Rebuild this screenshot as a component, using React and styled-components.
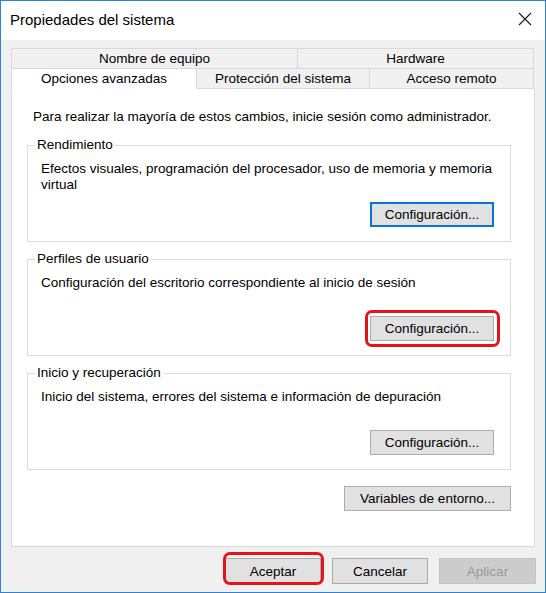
import React from "react"
import styled, { createGlobalStyle } from "styled-components"

const GlobalStyle = createGlobalStyle`
  html, body {
    margin: 0;
    padding: 0;
    background: #ffffff;
  }
  body {
    font-family: "Liberation Sans", Arial, sans-serif;
    font-size: 13.5px;
    color: #000;
  }
`

const Window = styled.div`
  box-sizing: border-box;
  width: 546px;
  height: 593px;
  border: 1px solid #2b83d6;
  background: #f0f0f0;
  display: flex;
  flex-direction: column;
`

const TitleBar = styled.div`
  height: 39px;
  background: #ffffff;
  display: flex;
  align-items: center;
  justify-content: space-between;
  padding: 0 13px 3px 9px;
  box-sizing: border-box;
`

const Title = styled.span`
  font-size: 15px;
  color: #000;
`

const Body = styled.div`
  flex: 1;
  display: flex;
  flex-direction: column;
  padding: 8px 10px 0 10px;
`

const TabRow = styled.div`
  display: grid;
  grid-template-columns: ${(p) => p.cols};
  height: ${(p) => p.h}px;
`

const Tab = styled.div`
  box-sizing: border-box;
  display: flex;
  align-items: center;
  justify-content: center;
  border-top: 1px solid #d9d9d9;
  border-right: 1px solid #d9d9d9;
  border-bottom: ${(p) => (p.bottom ? "1px solid" : "0 solid")} ${(p) => (p.active ? "#ffffff" : "#d9d9d9")};
  background: ${(p) => (p.active ? "#ffffff" : "#f0f0f0")};
  padding-bottom: 1px;
  &:first-child {
    border-left: 1px solid #d9d9d9;
  }
`

const Panel = styled.div`
  flex: 1;
  background: #ffffff;
  border: 1px solid #d9d9d9;
  border-top: none;
  padding: 20px 23px 0 15px;
  display: flex;
  flex-direction: column;
`

const Intro = styled.div`
  line-height: 16px;
  padding-left: 6px;
  margin-bottom: 12px;
`

const Group = styled.fieldset`
  margin: 0 0 ${(p) => p.gap}px 0;
  padding: 0 16px 14px 13px;
  border: 1px solid #dcdcdc;
  display: flex;
  flex-direction: column;
`

const Legend = styled.legend`
  padding: 0 2px;
  margin-left: -6px;
  line-height: 16px;
`

const GroupText = styled.div`
  line-height: 16px;
  min-height: 32px;
  margin-top: 8px;
  margin-right: -6px;
`

const Actions = styled.div`
  display: flex;
  justify-content: flex-end;
  margin-top: ${(p) => p.top || 0}px;
`

const Button = styled.button`
  position: relative;
  box-sizing: border-box;
  width: ${(p) => p.w}px;
  height: ${(p) => p.h || 25}px;
  font-family: "Liberation Sans", Arial, sans-serif;
  font-size: 13.5px;
  color: ${(p) => (p.disabled ? "#9a9a9a" : "#000")};
  background: ${(p) => (p.disabled ? "#cccccc" : "#e1e1e1")};
  border: ${(p) => (p.focused ? "2px solid #0a74d4" : p.disabled ? "1px solid #c4c4c4" : "1px solid #adadad")};
  padding: 0;
  margin: 0;
  &::after {
    content: "";
    display: ${(p) => (p.ring ? "block" : "none")};
    position: absolute;
    inset: ${(p) => p.ring || "0"};
    border: 3px solid #e3141c;
    border-radius: 7px;
  }
`

const Footer = styled.div`
  display: flex;
  justify-content: flex-end;
  gap: 11px;
  padding: 11px 0 8px 0;
  margin-right: -1px;
`

const CloseIcon = () => (
  <svg width="14" height="14" viewBox="0 0 14 14">
    <path d="M1 1 L13 13 M13 1 L1 13" stroke="#1a1a1a" strokeWidth="1.1" fill="none" />
  </svg>
)

const App = () => {
  return (
    <>
      <GlobalStyle />
      <Window>
        <TitleBar>
          <Title>Propiedades del sistema</Title>
          <CloseIcon />
        </TitleBar>
        <Body>
          <TabRow cols="287px 236px" h={20}>
            <Tab>Nombre de equipo</Tab>
            <Tab>Hardware</Tab>
          </TabRow>
          <TabRow cols="186px 173px 164px" h={21}>
            <Tab bottom active>Opciones avanzadas</Tab>
            <Tab bottom>Protección del sistema</Tab>
            <Tab bottom>Acceso remoto</Tab>
          </TabRow>
          <Panel>
            <Intro>Para realizar la mayoría de estos cambios, inicie sesión como administrador.</Intro>
            <Group gap={9}>
              <Legend>Rendimiento</Legend>
              <GroupText>Efectos visuales, programación del procesador, uso de memoria y memoria virtual</GroupText>
              <Actions top={9}>
                <Button w={124} focused>Configuración...</Button>
              </Actions>
            </Group>
            <Group gap={9}>
              <Legend>Perfiles de usuario</Legend>
              <GroupText>Configuración del escritorio correspondiente al inicio de sesión</GroupText>
              <Actions top={9}>
                <Button w={124} ring="-7px -7px -7px -6px">Configuración...</Button>
              </Actions>
            </Group>
            <Group gap={16}>
              <Legend>Inicio y recuperación</Legend>
              <GroupText>Inicio del sistema, errores del sistema e información de depuración</GroupText>
              <Actions top={9}>
                <Button w={124}>Configuración...</Button>
              </Actions>
            </Group>
            <Actions>
              <Button w={167}>Variables de entorno...</Button>
            </Actions>
          </Panel>
          <Footer>
            <Button w={96} h={26} ring="-7px -4px -2px -3px">Aceptar</Button>
            <Button w={96} h={26}>Cancelar</Button>
            <Button w={97} h={26} disabled>Aplicar</Button>
          </Footer>
        </Body>
      </Window>
    </>
  )
}

export default App
